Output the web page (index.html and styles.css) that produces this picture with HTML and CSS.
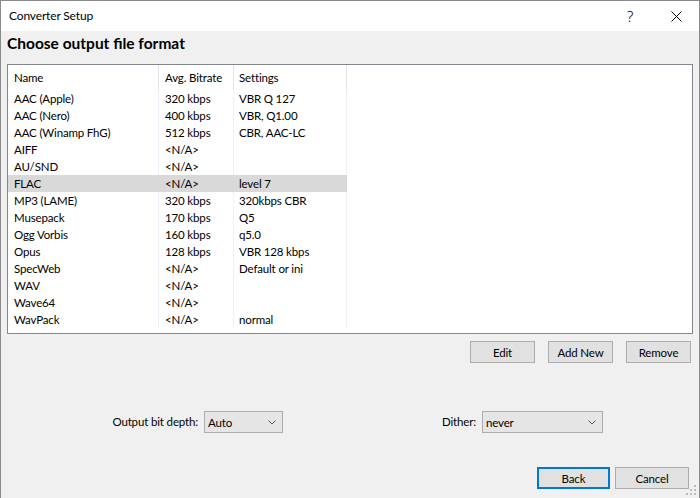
FILE: index.html
```html
<!DOCTYPE html>
<html lang="en">
<head>
<meta charset="utf-8">
<title>Converter Setup</title>
<link rel="stylesheet" href="styles.css">
</head>
<body>
<div class="window">
  <div class="titlebar">
    <span class="title">Converter Setup</span>
    <div class="caption">
      <span class="cap-btn help">?</span>
      <span class="cap-btn close">
        <svg width="11" height="11" viewBox="0 0 11 11"><path d="M0.5 0.5 L10.5 10.5 M10.5 0.5 L0.5 10.5" stroke="#000" stroke-width="1" fill="none"/></svg>
      </span>
    </div>
  </div>
  <div class="content">
    <h1 class="heading">Choose output file format</h1>
    <div class="list">
      <div class="grid">
        <div class="hcell">Name</div><div class="hcell">Avg. Bitrate</div><div class="hcell">Settings</div><div class="hfill"></div>

        <div class="cell">AAC (Apple)</div><div class="cell">320 kbps</div><div class="cell">VBR Q 127</div><div class="fill"></div>
        <div class="cell">AAC (Nero)</div><div class="cell">400 kbps</div><div class="cell">VBR, Q1.00</div><div class="fill"></div>
        <div class="cell">AAC (Winamp FhG)</div><div class="cell">512 kbps</div><div class="cell">CBR, AAC-LC</div><div class="fill"></div>
        <div class="cell">AIFF</div><div class="cell">&lt;N/A&gt;</div><div class="cell"></div><div class="fill"></div>
        <div class="cell">AU/SND</div><div class="cell">&lt;N/A&gt;</div><div class="cell"></div><div class="fill"></div>
        <div class="cell sel">FLAC</div><div class="cell sel">&lt;N/A&gt;</div><div class="cell sel">level 7</div><div class="fill"></div>
        <div class="cell">MP3 (LAME)</div><div class="cell">320 kbps</div><div class="cell">320kbps CBR</div><div class="fill"></div>
        <div class="cell">Musepack</div><div class="cell">170 kbps</div><div class="cell">Q5</div><div class="fill"></div>
        <div class="cell">Ogg Vorbis</div><div class="cell">160 kbps</div><div class="cell">q5.0</div><div class="fill"></div>
        <div class="cell">Opus</div><div class="cell">128 kbps</div><div class="cell">VBR 128 kbps</div><div class="fill"></div>
        <div class="cell">SpecWeb</div><div class="cell">&lt;N/A&gt;</div><div class="cell">Default or ini</div><div class="fill"></div>
        <div class="cell">WAV</div><div class="cell">&lt;N/A&gt;</div><div class="cell"></div><div class="fill"></div>
        <div class="cell">Wave64</div><div class="cell">&lt;N/A&gt;</div><div class="cell"></div><div class="fill"></div>
        <div class="cell">WavPack</div><div class="cell">&lt;N/A&gt;</div><div class="cell">normal</div><div class="fill"></div>
      </div>
    </div>

    <div class="list-actions">
      <button class="btn">Edit</button>
      <button class="btn">Add New</button>
      <button class="btn">Remove</button>
    </div>

    <div class="options">
      <div class="opt opt-depth">
        <span class="opt-label">Output bit depth:</span>
        <div class="combo combo-depth"><span>Auto</span>
          <svg width="8" height="5" viewBox="0 0 8 5"><path d="M0.5 0.5 L4 4 L7.5 0.5" stroke="#555" stroke-width="1" fill="none"/></svg>
        </div>
      </div>
      <div class="opt opt-dither">
        <span class="opt-label">Dither:</span>
        <div class="combo combo-dither"><span>never</span>
          <svg width="8" height="5" viewBox="0 0 8 5"><path d="M0.5 0.5 L4 4 L7.5 0.5" stroke="#555" stroke-width="1" fill="none"/></svg>
        </div>
      </div>
    </div>

    <div class="footer">
      <button class="btn btn-default">Back</button>
      <button class="btn btn-cancel">Cancel</button>
    </div>
  </div>
  <svg class="grip" width="11" height="11" viewBox="0 0 11 11">
    <rect x="8" y="0" width="2" height="2" fill="#bdbdbd"/>
    <rect x="4" y="4" width="2" height="2" fill="#bdbdbd"/>
    <rect x="8" y="4" width="2" height="2" fill="#bdbdbd"/>
    <rect x="0" y="8" width="2" height="2" fill="#bdbdbd"/>
    <rect x="4" y="8" width="2" height="2" fill="#bdbdbd"/>
    <rect x="8" y="8" width="2" height="2" fill="#bdbdbd"/>
  </svg>
</div>
</body>
</html>
```

FILE: styles.css
```css
* { box-sizing: border-box; }

html, body {
  margin: 0;
  padding: 0;
  background: #f0f0f0;
}

body {
  font-family: Lato, "Noto Sans", sans-serif;
  font-size: 11.5px;
  letter-spacing: -0.15px;
  color: #000;
}

.window {
  position: relative;
  width: 700px;
  height: 498px;
  border: 1px solid #8a8a8a;
  border-bottom: none;
  background: #f0f0f0;
  display: flex;
  flex-direction: column;
}

.titlebar {
  height: 30px;
  background: #fff;
  display: flex;
  align-items: center;
  justify-content: space-between;
  flex-shrink: 0;
}

.title {
  padding-left: 8px;
  line-height: 30px;
  font-size: 12px;
}

.caption {
  display: flex;
  height: 30px;
}

.cap-btn {
  width: 46px;
  height: 30px;
  display: flex;
  align-items: center;
  justify-content: center;
}

.help {
  font-family: "Noto Sans", sans-serif;
  font-size: 15px;
  font-weight: 300;
}

.content {
  padding: 0 6px;
  display: flex;
  flex-direction: column;
}

.heading {
  margin: 0;
  padding-top: 2px;
  font-size: 15.5px;
  letter-spacing: 0;
  line-height: 20px;
  font-weight: bold;
}

.list {
  margin-top: 11px;
  width: 686px;
  height: 270px;
  border: 1px solid #828790;
  background: #fff;
}

.grid {
  display: grid;
  grid-template-columns: 151px 75px 113px 1fr;
  grid-template-rows: 25px;
  grid-auto-rows: 17px;
}

.hcell, .cell {
  padding-left: 6px;
  white-space: nowrap;
  overflow: hidden;
}

.hcell {
  line-height: 25px;
  border-right: 1px solid #e5e5e5;
}

.hcell:nth-child(3) { padding-left: 5px; }

.cell {
  line-height: 17px;
  border-right: 1px solid #eef1f8;
}

.cell:nth-child(4n+3) { padding-left: 5px; }

.cell.sel {
  background: #d9d9d9;
  border-right-color: #d9d9d9;
}

.list-actions {
  margin-top: 7px;
  display: flex;
  justify-content: flex-end;
  gap: 13px;
  padding-right: 2px;
}

.btn {
  font-family: inherit;
  font-size: 11.5px;
  letter-spacing: -0.15px;
  color: #000;
  width: 65px;
  height: 22px;
  padding: 0;
  background: #e1e1e1;
  border: 1px solid #adadad;
  border-radius: 0;
}

.options {
  margin-top: 48px;
  display: flex;
  padding-left: 93px;
  gap: 137px;
}

.opt {
  display: flex;
  align-items: center;
  gap: 6px;
}

.opt-label {
  text-align: right;
  line-height: 22px;
}

.opt-depth .opt-label { width: 98px; }
.opt-dither .opt-label { width: 56px; }

.combo {
  height: 22px;
  background: #e5e5e5;
  border: 1px solid #adadad;
  display: flex;
  align-items: center;
  justify-content: space-between;
  padding: 0 6px 0 3px;
}

.combo-depth { width: 79px; }
.combo-dither { width: 121px; }

.footer {
  margin-top: 34px;
  display: flex;
  justify-content: flex-end;
  gap: 5px;
  padding-right: 4px;
}

.btn-default {
  width: 73px;
  border: 2px solid #0078d7;
}

.btn-cancel {
  width: 74px;
}

.grip {
  position: absolute;
  right: 2px;
  bottom: 2px;
}
```
